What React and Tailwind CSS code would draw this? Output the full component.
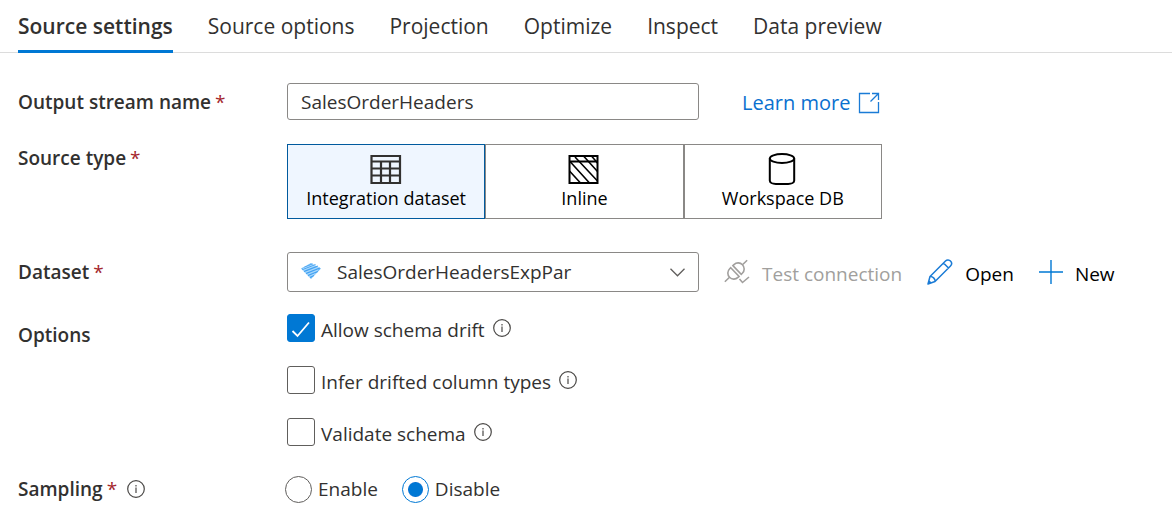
import { useState } from 'react';

const tabs = ['Source settings', 'Source options', 'Projection', 'Optimize', 'Inspect', 'Data preview'];

function InfoIcon() {
  return (
    <svg width="18" height="18" viewBox="0 0 18 18" fill="none" stroke="#4a4846" strokeWidth="1.2" aria-hidden="true">
      <circle cx="9" cy="9" r="8.3" />
      <path d="M9 7.5V13M9 5v1.4" />
    </svg>
  );
}

function TableIcon() {
  return (
    <svg width="32" height="32" viewBox="0 0 32 32" fill="none" stroke="#323130" strokeWidth="2.2" aria-hidden="true">
      <path d="M1.500 3h28.500v27H1.500zM1.500 8.500h28.500M1.500 15.500h28.500M1.500 22.500h28.500M11 8.500v21.500M20 8.500v21.500" />
    </svg>
  );
}

function InlineIcon() {
  return (
    <svg width="32" height="32" viewBox="0 0 32 32" fill="none" stroke="#000" strokeWidth="2" aria-hidden="true">
      <path d="M1.500 3h28v27h-28zM1.500 8.500h28" />
      <path d="M1.500 18l11 12M2 8.500L21.500 30M7 4l22.500 24M15.500 3l14 15.500M23.500 3l6 7" strokeWidth="1.600" />
    </svg>
  );
}

function DatabaseIcon() {
  return (
    <svg width="32" height="32" viewBox="0 0 32 32" fill="none" stroke="#000" strokeWidth="2" aria-hidden="true">
      <ellipse cx="15" cy="5.500" rx="12.200" ry="4.500" />
      <path d="M2.800 5.500v22c0 2 2.500 3.500 6 3.500h12.400c3.500 0 6-1.500 6-3.500v-22" />
    </svg>
  );
}

function ExternalIcon() {
  return (
    <svg width="22" height="22" viewBox="0 0 22 22" fill="none" stroke="#1a7bd6" strokeWidth="1.300" aria-hidden="true">
      <path d="M12 1.500H1.500v19h19V10M14 1.500h6.500V8M20.500 1.500l-8 8" />
    </svg>
  );
}

function PlugIcon() {
  return (
    <svg width="26" height="26" viewBox="0 0 26 26" fill="none" stroke="#a19f9d" strokeWidth="1.600" aria-hidden="true">
      <g transform="translate(12 12) rotate(-44)">
        <path d="M-15.500 0h6.500M9 0h6.500M-1.500-6v12h-1.500c-3.500 0-6-2.800-6-6s2.500-6 6-6zM1.500-6v12H3c3.500 0 6-2.800 6-6s-2.500-6-6-6z" />
      </g>
      <path d="M15.500 20l3 3.500 6.500-5.500" />
    </svg>
  );
}

function PencilIcon() {
  return (
    <svg width="26" height="26" viewBox="0 0 26 26" fill="none" stroke="#1a7bd6" strokeWidth="1.500" strokeLinejoin="round" aria-hidden="true">
      <path d="M1 25l2-7.500L18.500 2c1.500-1.500 3.800-1.300 5 .1 1.300 1.400 1.400 3.500 0 4.900L8 22.500zM3 17.500c2.500-.5 5.500 2.500 5 5M16.500 4l5 5M1.800 21.800l2.400 2.400" />
    </svg>
  );
}

function PlusIcon() {
  return (
    <svg width="24" height="24" viewBox="0 0 24 24" fill="none" stroke="#0078d4" strokeWidth="1.400" aria-hidden="true">
      <path d="M12 0v24M0 12h24" />
    </svg>
  );
}

function DatasetIcon() {
  return (
    <svg width="20" height="16" viewBox="0 0 20 16" aria-hidden="true">
      <path d="M10 0l10 5.500L10 16 0 5.500z" fill="#6fbcf8" />
      <path
        d="M3 4.500l9-3.500M1.500 6.500l13-5M3 8.500l14-5.500M5 10.500l14-5.500M7 12.500l10-4M9 14.500l4-2"
        stroke="#3d9df0"
        strokeWidth=".9"
      />
      <path
        d="M2 5.500l11-4.300M2 7.500l13.500-5.300M4 9.500L18 4M6 11.500l11-4.500M8 13.500l6.500-3"
        stroke="#d8efff"
        strokeWidth=".6"
      />
    </svg>
  );
}

const sourceTypes = [
  { name: 'Integration dataset', Icon: TableIcon },
  { name: 'Inline', Icon: InlineIcon },
  { name: 'Workspace DB', Icon: DatabaseIcon },
];

function Label({ htmlFor, id, required, children }) {
  const Tag = htmlFor ? 'label' : 'div';
  return (
    <Tag id={id} htmlFor={htmlFor} className="w-[269px] shrink-0 text-[19px]/7 font-semibold">
      {children}
      {required && <span className="ml-1 font-normal text-[#a4262c]">*</span>}
    </Tag>
  );
}

function Check({ id, label, defaultChecked }) {
  return (
    <div className="flex h-7 items-center">
      <span className="relative flex size-7">
        <input
          id={id}
          type="checkbox"
          defaultChecked={defaultChecked}
          className="peer size-7 appearance-none rounded-[3px] border border-[#605e5c] bg-white checked:border-[#0078d4] checked:bg-[#0078d4]"
        />
        <svg className="pointer-events-none absolute inset-0 hidden peer-checked:block" width="28" height="28" viewBox="0 0 28 28" fill="none" stroke="#fff" strokeWidth="1.800" aria-hidden="true">
          <path d="M5.500 17l5 5L22 8.500" />
        </svg>
      </span>
      <label htmlFor={id} className="pt-1 pl-1.5 text-[19px]/7">{label}</label>
      <span className="ml-2"><InfoIcon /></span>
    </div>
  );
}

function Radio({ label, defaultChecked }) {
  return (
    <label className="flex items-center gap-1.5 text-[19px]/7">
      <input
        type="radio"
        name="sampling"
        defaultChecked={defaultChecked}
        className="size-[27px] appearance-none rounded-full border border-[#605e5c] bg-white checked:border-[#0078d4] checked:bg-radial checked:from-[#0078d4] checked:from-[7px] checked:to-white checked:to-[8px]"
      />
      {label}
    </label>
  );
}

export default function App() {
  const [tab, setTab] = useState(tabs[0]);
  const [type, setType] = useState('Integration dataset');
  return (
    <main className="bg-white pb-6 font-['Open_Sans','Noto_Sans',sans-serif] text-[#323130]">
      <nav className="flex gap-[35px] px-[18px] text-[21px] shadow-[inset_0_-1px_0_#dcdcdc]">
        {tabs.map((name) => (
          <button
            key={name}
            type="button"
            onClick={() => setTab(name)}
            className={
              'h-[53px] border-b-3 pt-1 whitespace-nowrap ' +
              (tab === name ? 'border-[#0078d4] font-semibold' : 'border-transparent')
            }
          >
            {name}
          </button>
        ))}
      </nav>

      <form className="px-[18px] pt-[30px]">
        <div className="flex items-center">
          <Label htmlFor="stream" required>Output stream name</Label>
          <input
            id="stream"
            defaultValue="SalesOrderHeaders"
            className="h-[37px] w-[412px] rounded-[3px] border border-[#8a8886] px-[13px] text-[19px]"
          />
          <a href="#learn" className="ml-[43px] flex items-center gap-2 pt-0.5 text-xl whitespace-nowrap text-[#0a70cf]">
            Learn more <ExternalIcon />
          </a>
        </div>

        <div className="mt-6 flex">
          <Label id="type-label" required>Source type</Label>
          <div role="group" aria-labelledby="type-label" className="grid w-[595px] grid-cols-3 text-black">
            {sourceTypes.map(({ name, Icon }) => (
              <button
                key={name}
                type="button"
                aria-pressed={type === name}
                onClick={() => setType(name)}
                className={
                  'flex h-[75px] flex-col items-center border pt-2 text-lg/[26px] whitespace-nowrap ' +
                  (type === name ? 'border-[#005a9e] bg-[#eff6ff]' : 'border-[#8a8886]')
                }
              >
                <Icon />
                {name}
              </button>
            ))}
          </div>
        </div>

        <div className="mt-[33px] flex items-center">
          <Label htmlFor="dataset" required>Dataset</Label>
          <div className="relative flex w-[412px]">
            <select id="dataset" className="h-10 w-full appearance-none rounded-[3px] border border-[#8a8886] bg-white pl-[49px] text-[19px]">
              <option>SalesOrderHeadersExpPar</option>
            </select>
            <span className="pointer-events-none absolute top-[11px] left-[14px]"><DatasetIcon /></span>
            <svg className="pointer-events-none absolute top-4 right-[14px]" width="15" height="9" viewBox="0 0 15 9" fill="none" stroke="#605e5c" strokeWidth="1.300" aria-hidden="true">
              <path d="M.5.8l7 7 7-7" />
            </svg>
          </div>
          <div className="flex items-center gap-[25px] pl-[25px] text-[19px]/7 whitespace-nowrap text-black">
            <button type="button" disabled className="flex items-center gap-3 text-[#a19f9d]">
              <PlugIcon /><span className="pt-1">Test connection</span>
            </button>
            <button type="button" className="flex items-center gap-3">
              <PencilIcon /><span className="pt-1">Open</span>
            </button>
            <button type="button" className="flex items-center gap-3">
              <PlusIcon /><span className="pt-1">New</span>
            </button>
          </div>
        </div>

        <div className="mt-[22px] flex">
          <div className="pt-[7px]"><Label id="options-label">Options</Label></div>
          <div role="group" aria-labelledby="options-label" className="flex w-[400px] flex-col gap-6">
            <Check id="drift" label="Allow schema drift" defaultChecked />
            <Check id="infer" label="Infer drifted column types" />
            <Check id="validate" label="Validate schema" />
          </div>
        </div>

        <div className="mt-[29px] flex items-center">
          <div className="flex w-[267px] shrink-0 items-center gap-2.5">
            <div id="sampling-label" className="text-[19px]/7 font-semibold">
              Sampling<span className="ml-1 font-normal text-[#a4262c]">*</span>
            </div>
            <InfoIcon />
          </div>
          <div role="radiogroup" aria-labelledby="sampling-label" className="flex gap-6">
            <Radio label="Enable" />
            <Radio label="Disable" defaultChecked />
          </div>
        </div>
      </form>
    </main>
  );
}
